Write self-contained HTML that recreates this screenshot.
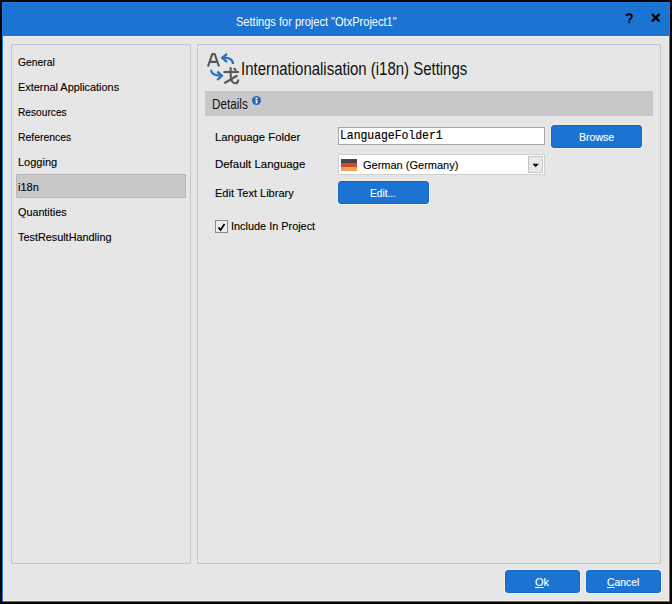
<!DOCTYPE html>
<html><head><meta charset="utf-8">
<style>
html,body{margin:0;padding:0;width:672px;height:604px;overflow:hidden;background:#050505;}
*{box-sizing:border-box;}
.a{position:absolute;}
.t{position:absolute;font-family:"Liberation Sans",sans-serif;white-space:nowrap;line-height:14px;transform-origin:0 0;}
#win{position:absolute;left:2px;top:2px;width:668px;height:600px;background:#1f7ce0;}
#title{position:absolute;left:3px;top:3px;width:666px;height:33px;background:#1b74d2;}
#client{position:absolute;left:3px;top:36px;width:666px;height:565px;background:#f7efe6;}
#cin{position:absolute;left:4px;top:37px;width:664px;height:563px;background:#e6e6e6;}
.panel{position:absolute;border:1px solid #c6c6c6;}
.btn{position:absolute;background:#1b74d2;border:1px solid #1369cb;border-radius:3px;box-shadow:0 0 0 1px #f5eee6;}
.nav{font-size:11px;color:#000;-webkit-text-stroke:0.12px #000;}
.lbl{font-size:11px;color:#000;-webkit-text-stroke:0.12px #000;}
.wt{color:#fff;font-size:11px;-webkit-text-stroke:0.12px #fff;}
</style></head><body>
<div id="win"></div>
<div id="title"></div>
<div id="client"></div>
<div id="cin"></div>

<!-- title text -->
<div class="t" style="left:236px;top:15px;font-size:12px;color:#fff;transform:scaleX(0.92);">Settings for project "OtxProject1"</div>
<!-- help ? -->
<svg class="a" style="left:620px;top:8px;" width="20" height="20" viewBox="620 8 20 20"><path d="M626.2 15.9 C626.8 14.7 627.8 14.2 629 14.2 C630.7 14.2 631.8 15 631.8 16.3 C631.8 17.6 630.9 18.3 630.1 18.9 C629.5 19.4 629.3 19.9 629.3 20.8" stroke="#000" stroke-width="1.9" fill="none"/><rect x="628.3" y="21.6" width="1.9" height="1.5" fill="#000"/></svg>
<!-- close X -->
<svg class="a" style="left:650px;top:12px;" width="12" height="12" viewBox="0 0 12 12"><path d="M1.9 2 L9.5 9.3 M9.5 2 L1.9 9.3" stroke="#000" stroke-width="2.4" fill="none"/></svg>

<!-- panels -->
<div class="panel" style="left:11px;top:44px;width:180px;height:520px;"></div>
<div class="panel" style="left:197px;top:44px;width:464px;height:520px;"></div>

<!-- selection -->
<div class="a" style="left:16px;top:174px;width:170px;height:24px;background:#c9c9c9;border:1px solid #b9b9b9;"></div>

<!-- nav -->
<div class="t nav" style="left:18px;top:55px;transform:scaleX(0.94);">General</div>
<div class="t nav" style="left:18px;top:80px;transform:scaleX(0.99);">External Applications</div>
<div class="t nav" style="left:18px;top:105px;transform:scaleX(0.925);">Resources</div>
<div class="t nav" style="left:18px;top:130px;transform:scaleX(0.946);">References</div>
<div class="t nav" style="left:18px;top:155px;">Logging</div>
<div class="t nav" style="left:18px;top:180px;">i18n</div>
<div class="t nav" style="left:18px;top:205px;transform:scaleX(0.98);">Quantities</div>
<div class="t nav" style="left:18px;top:230px;transform:scaleX(0.986);">TestResultHandling</div>

<!-- icon -->
<svg class="a" style="left:200px;top:48px;" width="44" height="40" viewBox="200 48 44 40">
  <path d="M208 66.5 L212.3 54 L214.7 54 L219 66.5 M210.3 61.9 L216.8 61.9" stroke="#565656" stroke-width="2.1" fill="none" stroke-linejoin="round"/>
  <path d="M223 57.7 C229 57.2 233 59.5 233 64" stroke="#2b6fc1" stroke-width="2.2" fill="none"/>
  <path d="M227 53.8 L222.3 57.8 L227 62" stroke="#2b6fc1" stroke-width="2.4" fill="none"/>
  <path d="M211.1 69.8 C211.1 73.8 214.5 75.6 221 75.6" stroke="#2b6fc1" stroke-width="2.2" fill="none"/>
  <path d="M217.3 71.6 L221.8 75.7 L217.3 80" stroke="#2b6fc1" stroke-width="2.4" fill="none"/>
  <path d="M223.5 72 L239 72" stroke="#585858" stroke-width="2.1" fill="none"/>
  <path d="M230.6 67.3 L230.8 77 C231 81 233 83.3 235.8 83.3 C237.3 83.3 238 82 238.3 79.5" stroke="#585858" stroke-width="2.1" fill="none"/>
  <path d="M237.4 75.5 L224.3 83.3" stroke="#585858" stroke-width="2.2" fill="none"/>
  <path d="M233.7 68.2 L236.2 70.6" stroke="#585858" stroke-width="2.1" fill="none"/>
</svg>

<!-- header -->
<div class="t" style="left:241px;top:59px;font-size:17.5px;line-height:20px;color:#111;transform:scaleX(0.855);">Internationalisation (i18n) Settings</div>

<!-- details bar -->
<div class="a" style="left:205px;top:91px;width:448px;height:25px;background:#c8c8c8;"></div>
<div class="t" style="left:212px;top:95px;font-size:15px;line-height:17px;color:#111;transform:scaleX(0.78);">Details</div>
<svg class="a" style="left:252px;top:96px;" width="9" height="9" viewBox="0 0 9 9"><circle cx="4.5" cy="4.5" r="4.5" fill="#2867b6"/><path d="M3.2 3.7 L5.4 3.7 L5.4 7.4 L3.7 7.4 L3.7 4.5 L3.2 4.5 Z" fill="#fff"/><rect x="3.5" y="1.5" width="2" height="1.5" fill="#fff"/></svg>

<!-- labels -->
<div class="t lbl" style="left:215px;top:130px;transform:scaleX(1.024);">Language Folder</div>
<div class="t lbl" style="left:215px;top:157px;transform:scaleX(1.04);">Default Language</div>
<div class="t lbl" style="left:215px;top:186px;">Edit Text Library</div>

<!-- input -->
<div class="a" style="left:338px;top:127px;width:207px;height:18px;background:#fff;border:1px solid #a6a6a6;"></div>
<div class="t" style="left:340px;top:128px;font-family:'Liberation Mono',monospace;font-size:12.9px;line-height:15px;color:#000;-webkit-text-stroke:0.2px #000;transform:scaleX(0.884);">LanguageFolder1</div>

<!-- browse -->
<div class="btn" style="left:551px;top:125px;width:91px;height:23px;"></div>
<div class="t wt" style="left:579px;top:130px;transform:scaleX(0.96);">Browse</div>

<!-- combo -->
<div class="a" style="left:338px;top:154px;width:207px;height:21px;background:#fff;border:1px solid #cfcfcf;"></div>
<div class="a" style="left:341px;top:159px;width:16px;height:4px;background:#474747;"></div>
<div class="a" style="left:341px;top:163px;width:16px;height:4px;background:#cf4a2c;"></div>
<div class="a" style="left:341px;top:167px;width:16px;height:4px;background:#e8a552;"></div>
<div class="t lbl" style="left:363px;top:158px;">German (Germany)</div>
<div class="a" style="left:528px;top:156px;width:15px;height:17px;background:#e8e8e8;border:1px solid #c6c6c6;"></div>
<svg class="a" style="left:532px;top:163px;" width="8" height="5" viewBox="0 0 8 5"><path d="M0.6 0.8 L6.8 0.8 L3.7 4.2 Z" fill="#000"/></svg>

<!-- edit -->
<div class="btn" style="left:338px;top:181px;width:91px;height:23px;"></div>
<div class="t wt" style="left:370px;top:186px;transform:scaleX(0.92);">Edit...</div>

<!-- checkbox -->
<div class="a" style="left:215px;top:220px;width:13px;height:13px;border:1px solid #8a8a8a;background:#ececec;"></div>
<svg class="a" style="left:215px;top:220px;" width="13" height="13" viewBox="0 0 13 13"><path d="M3.5 7.5 L5.5 10 L9.5 4" stroke="#000" stroke-width="1.8" fill="none"/></svg>
<div class="t lbl" style="left:231px;top:219px;transform:scaleX(0.99);">Include In Project</div>

<!-- ok / cancel -->
<div class="btn" style="left:505px;top:570px;width:75px;height:23px;"></div>
<div class="t wt" style="left:535px;top:575px;"><u>O</u>k</div>
<div class="btn" style="left:586px;top:570px;width:75px;height:23px;"></div>
<div class="t wt" style="left:607px;top:575px;transform:scaleX(0.94);"><u>C</u>ancel</div>
</body></html>
